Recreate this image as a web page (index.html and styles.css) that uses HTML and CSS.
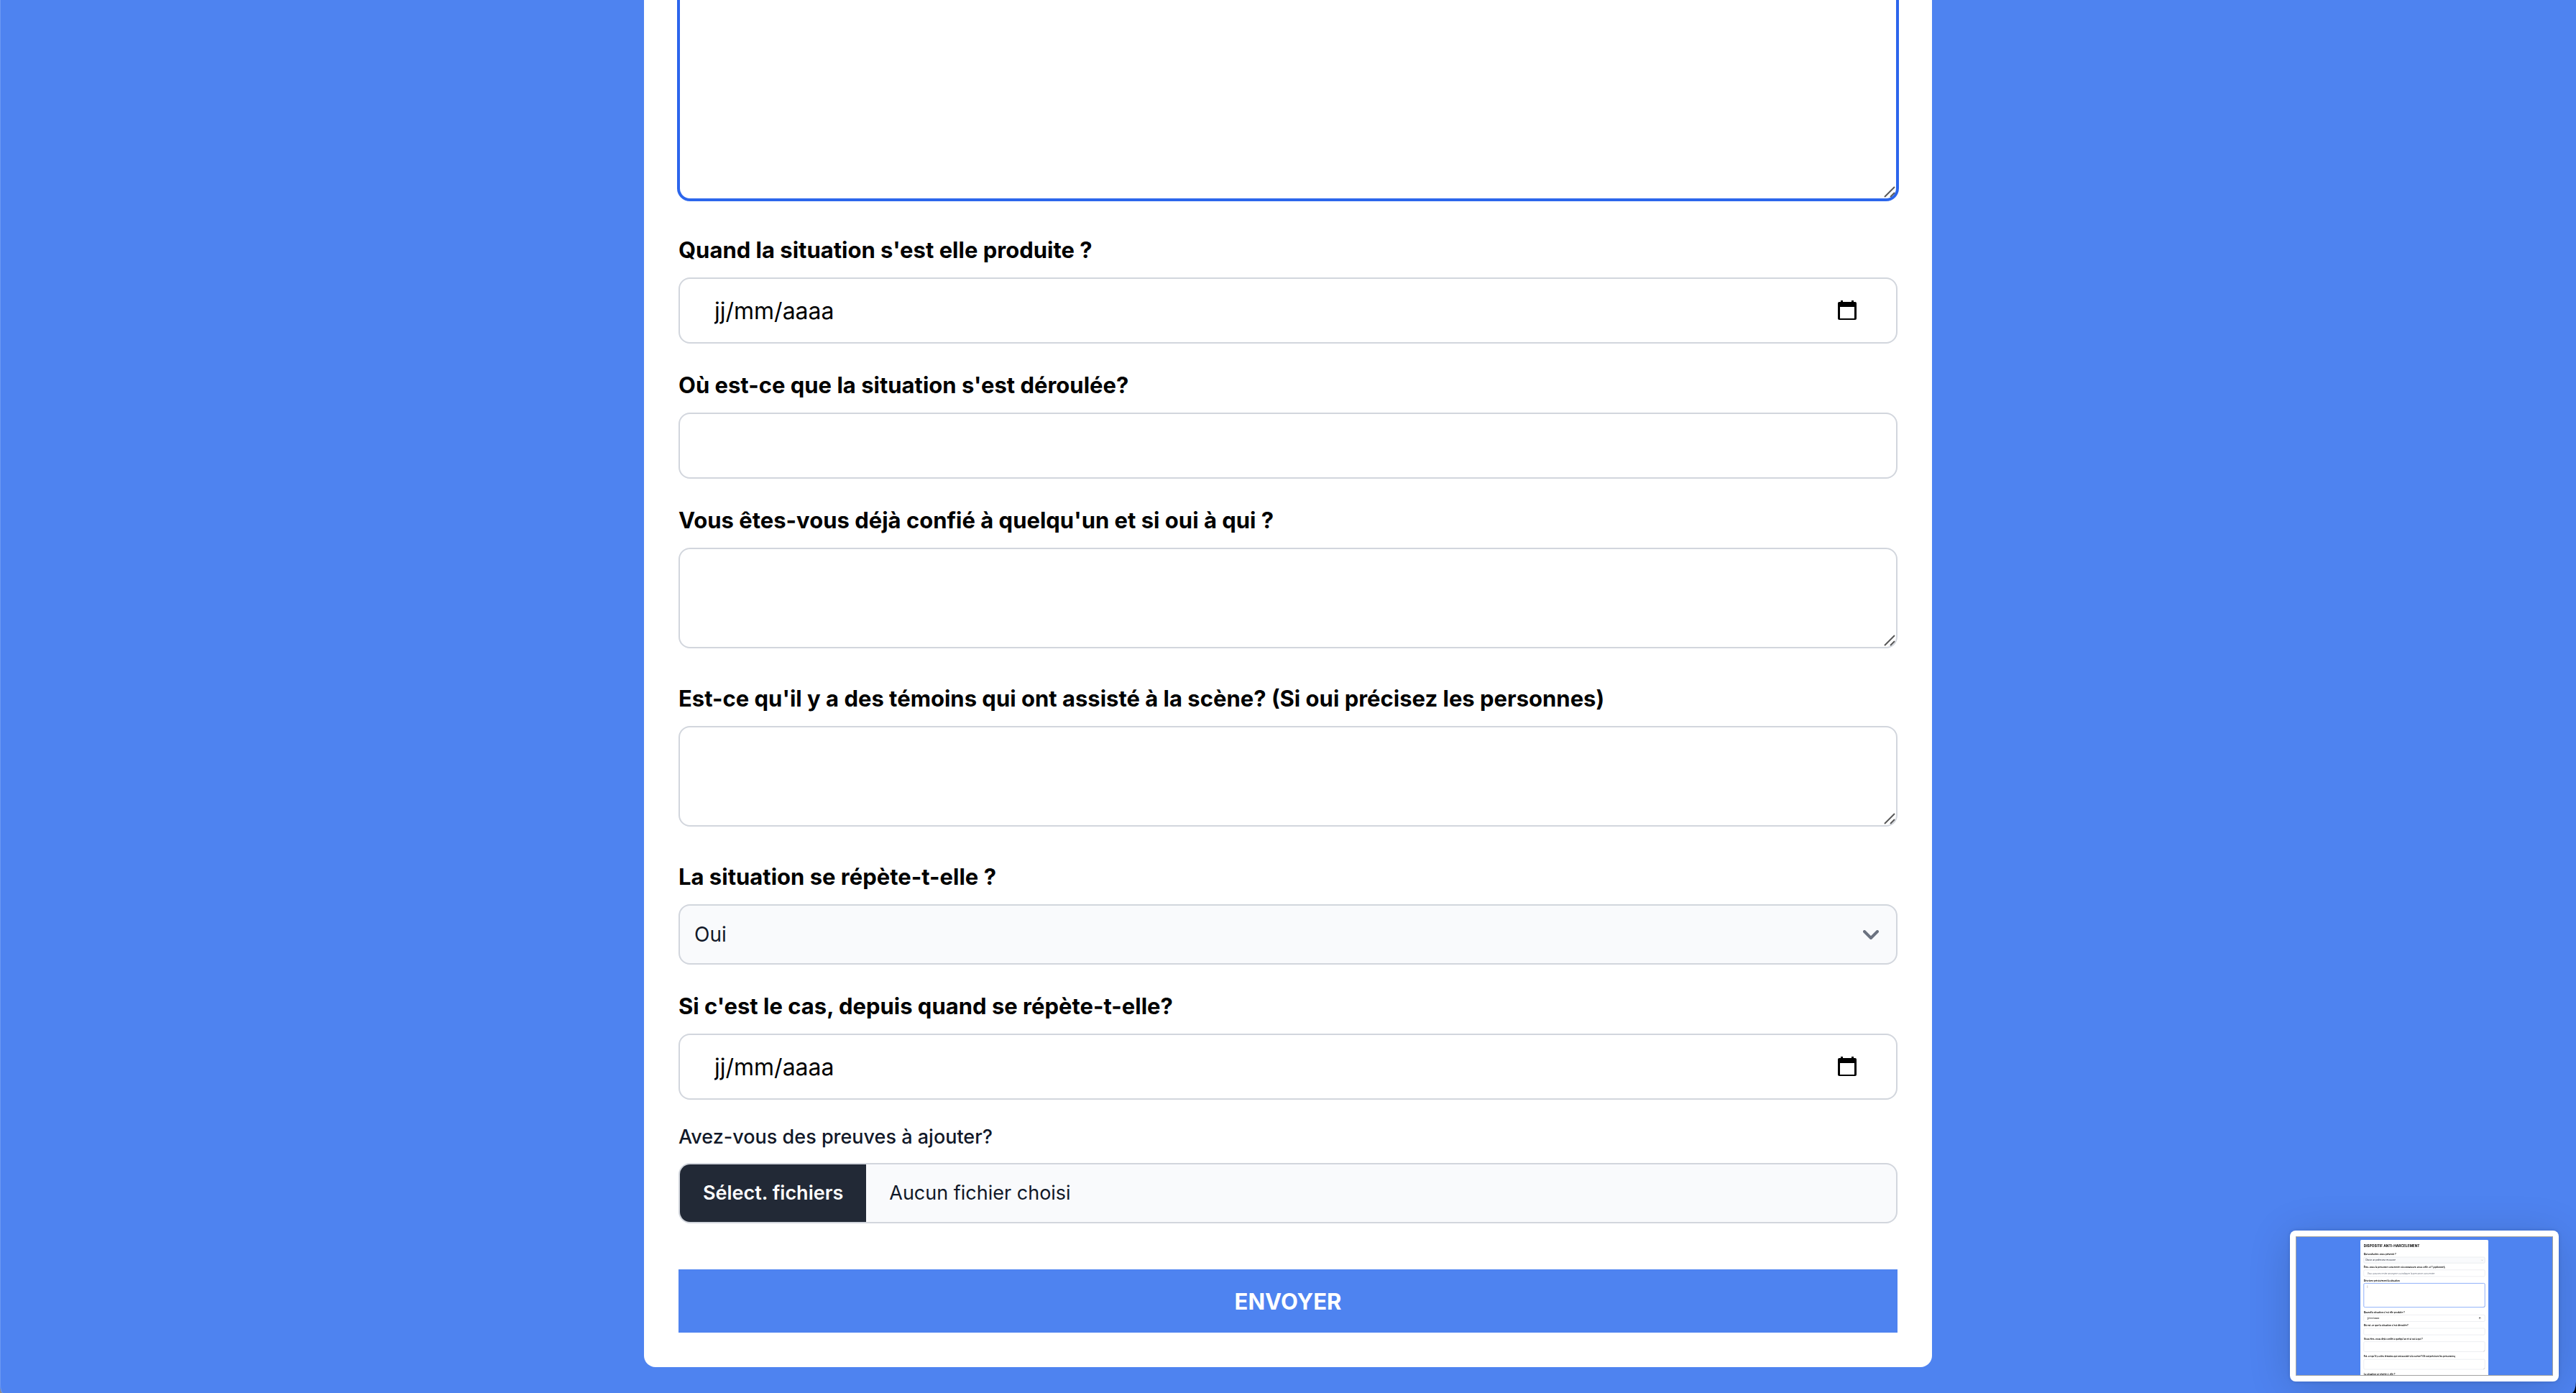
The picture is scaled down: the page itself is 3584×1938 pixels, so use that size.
FILE: index.html
```html
<!DOCTYPE html>
<html lang="fr">
<head>
<meta charset="utf-8">
<title>Dispositif anti-harcèlement</title>
<link rel="stylesheet" href="styles.css">
</head>
<body>
<svg class="sprite" aria-hidden="true">
  <symbol id="calendar" viewBox="0 0 26 28">
    <path fill-rule="evenodd" d="M4 0h3v2h12V0h3v2h2a2 2 0 0 1 2 2v21a2 2 0 0 1-2 2H2a2 2 0 0 1-2-2V4a2 2 0 0 1 2-2h2zM3 9v16h20V9z"/>
  </symbol>
  <symbol id="grip" viewBox="0 0 16 16">
    <path d="M1 15 15 1M9 15l6-6" fill="none" stroke="#595959" stroke-width="2"/>
  </symbol>
</svg>
<main class="page">
  <form class="card">
    <div class="area">
      <textarea class="control description" aria-label="Décrivez précisément la situation"></textarea>
      <svg class="grip"><use href="#grip"/></svg>
    </div>

    <label class="label" for="when">Quand la situation s'est elle produite ?</label>
    <div class="date">
      <input class="control" id="when" type="text" value="jj/mm/aaaa">
      <button class="picker" type="button" aria-label="Ouvrir le calendrier"><svg class="calendar"><use href="#calendar"/></svg></button>
    </div>

    <label class="label" for="where">Où est-ce que la situation s'est déroulée?</label>
    <input class="control" id="where" type="text">

    <label class="label" for="told">Vous êtes-vous déjà confié à quelqu'un et si oui à qui ?</label>
    <div class="area">
      <textarea class="control" id="told"></textarea>
      <svg class="grip"><use href="#grip"/></svg>
    </div>

    <label class="label" for="witness">Est-ce qu'il y a des témoins qui ont assisté à la scène? (Si oui précisez les personnes)</label>
    <div class="area">
      <textarea class="control" id="witness"></textarea>
      <svg class="grip"><use href="#grip"/></svg>
    </div>

    <label class="label" for="repeat">La situation se répète-t-elle ?</label>
    <div class="choice">
      <select class="select" id="repeat"><option>Oui</option><option>Non</option></select>
      <svg class="chevron" viewBox="0 0 22 14"><path d="M2 2l9 9 9-9" fill="none" stroke="#6b7280" stroke-width="4" stroke-linecap="round" stroke-linejoin="round"/></svg>
    </div>

    <label class="label" for="since">Si c'est le cas, depuis quand se répète-t-elle?</label>
    <div class="date">
      <input class="control" id="since" type="text" value="jj/mm/aaaa">
      <button class="picker" type="button" aria-label="Ouvrir le calendrier"><svg class="calendar"><use href="#calendar"/></svg></button>
    </div>

    <label class="label label-small" for="files">Avez-vous des preuves à ajouter?</label>
    <div class="file">
      <input class="file-input" id="files" type="file" multiple>
      <label class="file-button" for="files">Sélect. fichiers</label>
      <span class="file-name">Aucun fichier choisi</span>
    </div>

    <button class="submit" type="submit">ENVOYER</button>
  </form>
</main>

<aside class="preview">
  <svg class="preview-image" viewBox="0 0 3584 1938" preserveAspectRatio="none">
    <rect class="p-bg" width="3584" height="1938"/>
    <path class="p-card" d="M896 1938V56q0-16 16-16h1760q16 0 16 16v1882z"/>
    <text class="p-title" x="944" y="140">DISPOSITIF ANTI-HARCELEMENT</text>
    <g class="p-box">
      <rect class="p-fill" x="944" y="282" width="1696" height="84" rx="16"/>
      <rect x="944" y="462" width="1696" height="92" rx="16"/>
      <rect class="p-focus" x="944" y="650" width="1696" height="336" rx="16"/>
      <rect x="944" y="1094" width="1696" height="92" rx="16"/>
      <rect x="944" y="1282" width="1696" height="92" rx="16"/>
      <rect x="944" y="1470" width="1696" height="140" rx="16"/>
      <rect x="944" y="1718" width="1696" height="140" rx="16"/>
    </g>
    <g class="p-label">
      <text x="944" y="254">Qui souhaitez-vous prévenir ?</text>
      <text x="944" y="434">Êtes-vous la personne concernée où connaissez-vous celle-ci ? (optionnel)</text>
      <text x="944" y="622">Décrivez précisément la situation</text>
      <text x="944" y="1066">Quand la situation s'est elle produite ?</text>
      <text x="944" y="1254">Où est-ce que la situation s'est déroulée?</text>
      <text x="944" y="1442">Vous êtes-vous déjà confié à quelqu'un et si oui à qui ?</text>
      <text x="944" y="1690">Est-ce qu'il y a des témoins qui ont assisté à la scène? (Si oui précisez les personnes)</text>
      <text x="944" y="1938">La situation se répète-t-elle ?</text>
    </g>
    <text class="p-choice" x="966" y="335">Choisir un professeur ressource</text>
    <text class="p-hint" x="994" y="520">Vous pouvez rester anonyme ou indiquer la personne concernée</text>
    <text class="p-value" x="994" y="1152">jj/mm/aaaa</text>
    <path class="p-stroke" d="M994 680v36M2592 320l9 9 9-9M2622 982l14-14M2622 1606l14-14M2622 1854l14-14"/>
    <use href="#calendar" x="2557" y="1126" width="26" height="28"/>
  </svg>
</aside>
</body>
</html>
```
FILE: styles.css
```css
* { box-sizing: border-box; }

html { background: linear-gradient(90deg, #8c8c8c 50%, #000 50%); }

body {
  margin: 0;
  font-family: Inter, "Liberation Sans", sans-serif;
  font-size: 32px;
  line-height: 48px;
  color: #000;
}

.sprite { position: absolute; width: 0; height: 0; }

.page {
  display: flex;
  justify-content: center;
  align-items: flex-start;
  min-height: 100vh;
  padding-bottom: 36px;
  background: #4e83f0;
  border-radius: 0 0 6px 4px / 0 0 16px 12px;
  box-shadow: inset 1px 0 0 #6c98f3;
}

.card {
  display: flex;
  flex-direction: column;
  width: 50%;
  padding: 0 48px 48px;
  background: #fff;
  border-radius: 0 0 16px 16px;
}

.label {
  margin: 34px 0 14px;
  font-size: 31px;
  font-weight: 700;
}

.label-small {
  margin: 32px 0 16px;
  font-size: 27px;
  line-height: 40px;
  font-weight: 500;
  color: #111828;
}

.control {
  display: block;
  width: 100%;
  height: 92px;
  margin: 0;
  padding: 20px 48px;
  font: inherit;
  color: inherit;
  background: #fff;
  border: 2px solid #d2d6dd;
  border-radius: 16px;
  outline: 0;
}

textarea.control { height: 140px; resize: none; }

.area { position: relative; margin-bottom: 12px; }

.grip {
  position: absolute;
  right: 3px;
  bottom: 3px;
  width: 16px;
  height: 16px;
}

textarea.description {
  height: 278px;
  border-color: #2c66ec;
  border-top: 0;
  border-radius: 0 0 16px 16px;
  box-shadow: 0 0 0 2px #2c66ec;
}

.date { position: relative; }

.picker {
  position: absolute;
  top: 0;
  bottom: 0;
  right: 48px;
  display: flex;
  align-items: center;
  padding: 0 9px;
  background: none;
  border: 0;
}

.calendar { width: 26px; height: 28px; }

.choice { position: relative; }

.select {
  display: block;
  appearance: none;
  width: 100%;
  height: 84px;
  padding: 0 20px;
  font: inherit;
  font-size: 28px;
  line-height: 40px;
  color: #111828;
  background: #f9fafc;
  border: 2px solid #d2d6dd;
  border-radius: 16px;
}

.chevron {
  position: absolute;
  top: 36px;
  right: 26px;
  width: 22px;
  height: 14px;
}

.file {
  display: flex;
  position: relative;
  height: 84px;
  overflow: hidden;
  font-size: 27px;
  color: #111828;
  background: #f9fafc;
  border: 2px solid #d2d6dd;
  border-radius: 16px;
}

.file-input { position: absolute; width: 1px; height: 1px; opacity: 0; }

.file-button {
  padding: 16px 32px;
  font-weight: 600;
  color: #fff;
  background: #222936;
}

.file-name { padding: 16px 32px; }

.submit {
  height: 88px;
  margin-top: 64px;
  padding: 2px 0 0;
  font: inherit;
  font-size: 31px;
  font-weight: 700;
  color: #fff;
  background: #4e83f0;
  border: 0;
}

.preview {
  position: fixed;
  right: 24px;
  bottom: 16px;
  width: 374px;
  height: 210px;
  padding: 8px;
  background: #fff;
  border-radius: 8px;
  box-shadow: 0 0 6px rgba(0, 0, 0, 0.15), 0 8px 60px rgba(0, 0, 0, 0.15);
}

.preview-image {
  display: block;
  width: 100%;
  height: 100%;
  border: 1px solid #a3a3a3;
}

.p-bg { fill: #4e83f0; }
.p-card { fill: #fff; }
.p-box { fill: #fff; stroke: #d2d6dd; stroke-width: 4px; }
.p-fill { fill: #f9fafc; }
.p-focus { stroke: #8fb0fa; stroke-width: 10px; }
.p-title { font-size: 48px; font-weight: 700; }
.p-label { font-size: 31px; font-weight: 700; }
.p-choice { font-size: 28px; fill: #111828; }
.p-hint { font-size: 31px; fill: #6b7280; }
.p-value { font-size: 32px; }
.p-stroke { fill: none; stroke: #595959; stroke-width: 3px; }
```
